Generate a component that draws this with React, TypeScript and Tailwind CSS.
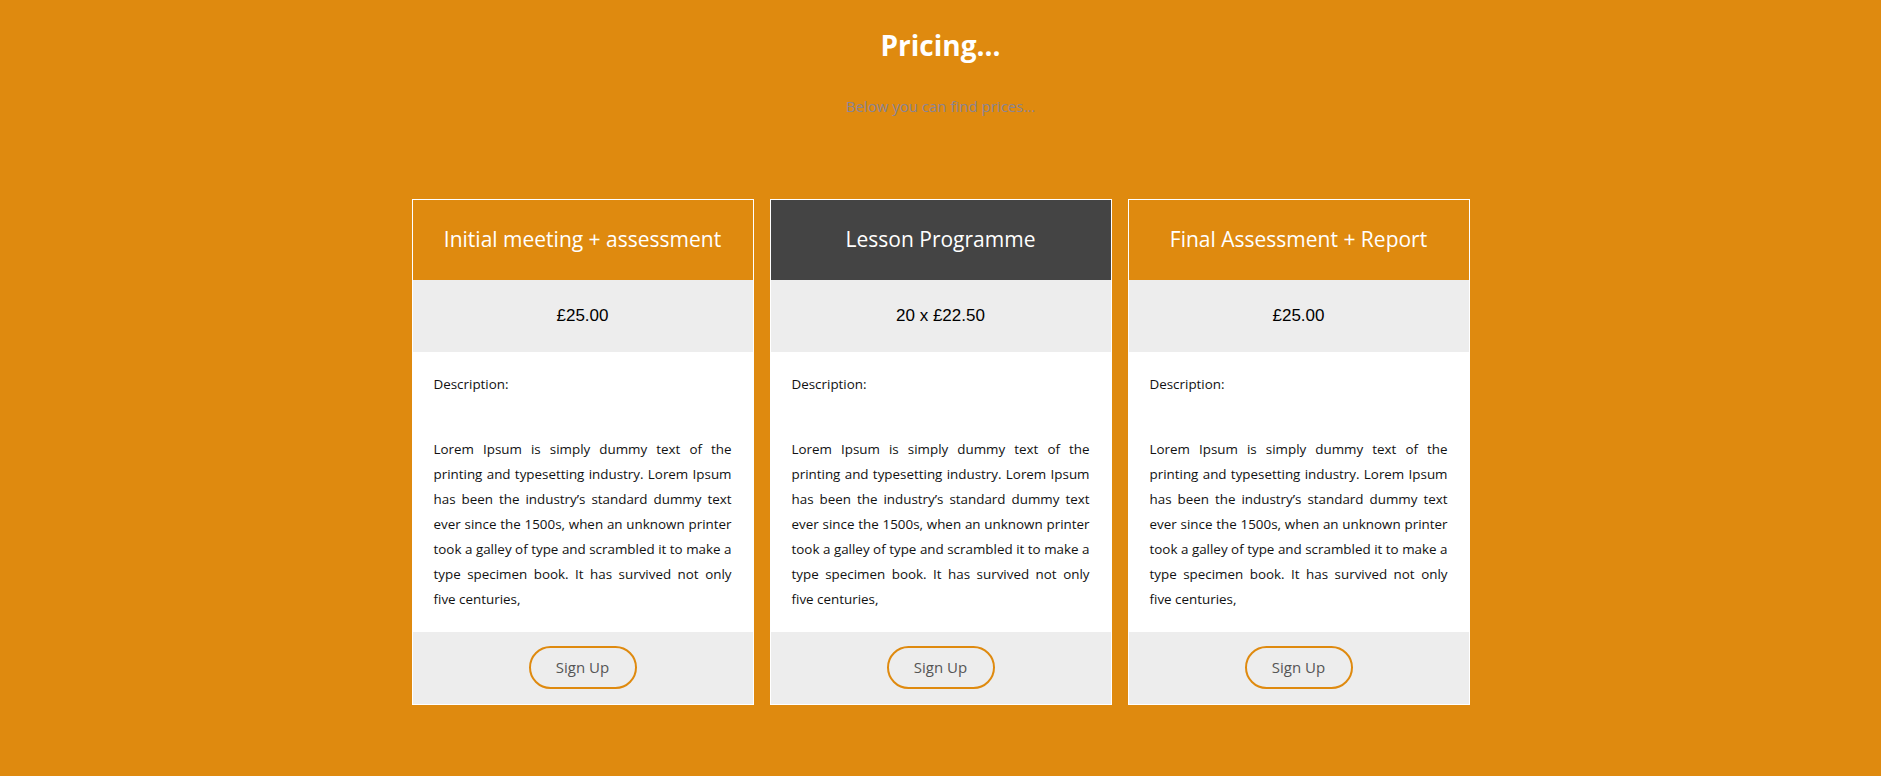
import React from "react";

interface Plan {
  title: string;
  price: string;
  dark?: boolean;
}

const plans: Plan[] = [
  { title: "Initial meeting + assessment", price: "£25.00" },
  { title: "Lesson Programme", price: "20 x £22.50", dark: true },
  { title: "Final Assessment + Report", price: "£25.00" },
];

const lorem =
  "Lorem Ipsum is simply dummy text of the printing and typesetting industry. Lorem Ipsum has been the industry’s standard dummy text ever since the 1500s, when an unknown printer took a galley of type and scrambled it to make a type specimen book. It has survived not only five centuries,";

const PricingCard: React.FC<{ plan: Plan }> = ({ plan }) => {
  return (
    <div className="w-[342px] flex flex-col border border-white bg-white">
      <div
        className={`h-[80px] flex items-center justify-center text-white text-[21px] font-['Open_Sans',sans-serif] ${
          plan.dark ? "bg-[#444444]" : "bg-[#df8a0f]"
        }`}
      >
        {plan.title}
      </div>
      <div className="h-[72px] flex items-center justify-center bg-[#ededed] text-[17px] text-black font-['Liberation_Sans',sans-serif]">
        {plan.price}
      </div>
      <div className="bg-white px-[21px] pt-[20px] pb-[20px] text-[13.4px] text-[#111] font-['Open_Sans',sans-serif]">
        <p className="leading-[25px]">Description:</p>
        <p className="mt-[40px] leading-[25px] text-justify">{lorem}</p>
      </div>
      <div className="h-[72px] flex items-center justify-center bg-[#ededed]">
        <button className="w-[108px] h-[43px] rounded-full border-2 border-[#df8a0f] text-[15px] text-[#555] font-['Open_Sans',sans-serif]">
          Sign Up
        </button>
      </div>
    </div>
  );
};

export default function App() {
  return (
    <div className="min-h-[776px] bg-[#df8a0f] flex flex-col items-center pt-[21px]">
      <h1 className="text-[28px] font-bold text-white font-['Open_Sans',sans-serif] leading-[48px]">
        Pricing...
      </h1>
      <p className="mt-[26px] text-[15px] text-[#8a8496] font-['Open_Sans',sans-serif]">
        Below you can find prices...
      </p>
      <div className="mt-[81px] flex gap-[16px] items-start">
        {plans.map((p) => (
          <PricingCard key={p.title} plan={p} />
        ))}
      </div>
    </div>
  );
}
